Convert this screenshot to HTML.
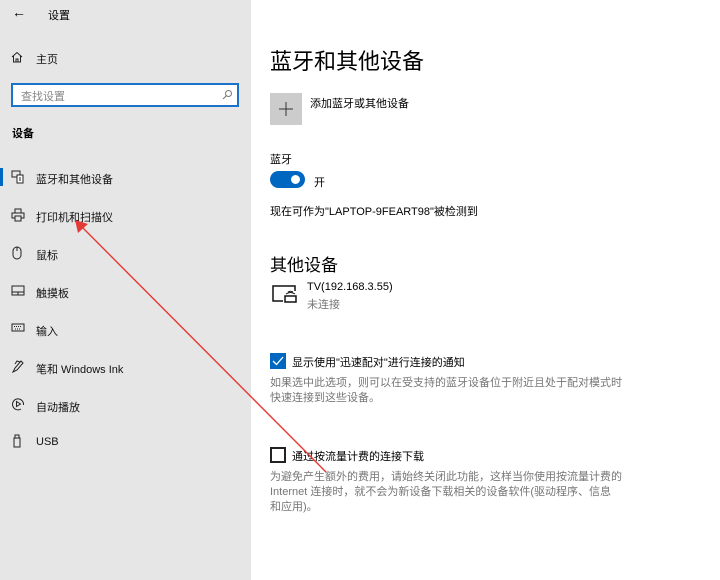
<!DOCTYPE html>
<html><head><meta charset="utf-8"><style>
*{margin:0;padding:0;box-sizing:border-box}
body{width:720px;height:580px;overflow:hidden;background:#fff;font-family:"Liberation Sans","Noto Sans CJK SC",sans-serif;color:#000;position:relative}
.side{position:absolute;left:0;top:0;width:251px;height:580px;background:#e6e6e6}
.t{position:absolute;white-space:nowrap}
.nav{font-size:11px;color:#111}
.ic{position:absolute;left:11px}
.g{color:#767676}
</style></head><body>
<div class="side">
<div class="t" style="left:12px;top:4px;font-size:14px">←</div>
<div class="t" style="left:48px;top:7px;font-size:11px">设置</div>
<svg class="ic" style="top:51px" width="12" height="12" viewBox="0 0 12 12"><path d="M1 6L6 1.5 11 6M2.5 5V11H9.5V5M5 11V8H7V11" fill="none" stroke="#222" stroke-width="1"/></svg>
<div class="t nav" style="left:36px;top:51px">主页</div>
<div style="position:absolute;left:11px;top:83px;width:228px;height:24px;border:2px solid #1a73c8;background:#fff"></div>
<div class="t" style="left:21px;top:88px;font-size:11px;color:#888">查找设置</div>
<svg style="position:absolute;left:222px;top:89px" width="11" height="11" viewBox="0 0 11 11"><circle cx="6.5" cy="4.5" r="3" fill="none" stroke="#777"/><path d="M4.5 6.5L1 10" stroke="#777"/></svg>
<div class="t" style="left:12px;top:125px;font-size:11px;font-weight:bold">设备</div>
<div style="position:absolute;left:0;top:168px;width:3px;height:18px;background:#0067c0"></div>
<svg class="ic" style="top:170px" width="14" height="14" viewBox="0 0 14 14"><rect x="1" y="1" width="8" height="6" fill="none" stroke="#222"/><rect x="6" y="5" width="6" height="8" fill="#fff" stroke="#222"/><path d="M8 8h2M8 10h2" stroke="#222"/></svg>
<div class="t nav" style="left:36px;top:171px">蓝牙和其他设备</div>
<svg class="ic" style="top:208px" width="14" height="14" viewBox="0 0 14 14"><rect x="4" y="1" width="6" height="4" fill="none" stroke="#222"/><rect x="1" y="5" width="12" height="5" fill="none" stroke="#222"/><rect x="4" y="8" width="6" height="5" fill="#e6e6e6" stroke="#222"/></svg>
<div class="t nav" style="left:36px;top:209px">打印机和扫描仪</div>
<svg class="ic" style="top:246px" width="12" height="14" viewBox="0 0 12 14"><rect x="2" y="1" width="8" height="12" rx="4" fill="none" stroke="#222"/><path d="M6 1v4" stroke="#222"/></svg>
<div class="t nav" style="left:36px;top:247px">鼠标</div>
<svg class="ic" style="top:285px" width="14" height="12" viewBox="0 0 14 12"><rect x="1" y="1" width="12" height="9" fill="none" stroke="#222"/><path d="M1 7h12M7 7v3" stroke="#222"/></svg>
<div class="t nav" style="left:36px;top:285px">触摸板</div>
<svg class="ic" style="top:323px" width="14" height="10" viewBox="0 0 14 10"><rect x="1" y="1" width="12" height="7" fill="none" stroke="#222"/><path d="M3 3.5h8M4 6h6" stroke="#222" stroke-dasharray="1 1"/></svg>
<div class="t nav" style="left:36px;top:323px">输入</div>
<svg class="ic" style="top:359px" width="14" height="14" viewBox="0 0 14 14"><path d="M2 13L4 9 10 2 12 4 6 11Z M9 3l-3-1-2 3" fill="none" stroke="#222"/></svg>
<div class="t nav" style="left:36px;top:361px">笔和 Windows Ink</div>
<svg class="ic" style="top:397px" width="14" height="14" viewBox="0 0 14 14"><path d="M10 12A5.5 5.5 0 1 1 12.5 8" fill="none" stroke="#222"/><path d="M5.5 4.5v5l4-2.5z" fill="none" stroke="#222"/></svg>
<div class="t nav" style="left:36px;top:399px">自动播放</div>
<svg class="ic" style="top:434px" width="12" height="14" viewBox="0 0 12 14"><rect x="3" y="4" width="6" height="9" fill="none" stroke="#222"/><rect x="4" y="1" width="4" height="3" fill="none" stroke="#222"/></svg>
<div class="t nav" style="left:36px;top:436px">USB</div>
</div>

<div class="t" style="left:270px;top:44px;font-size:22px">蓝牙和其他设备</div>
<div style="position:absolute;left:270px;top:93px;width:32px;height:32px;background:#ccc"></div>
<svg style="position:absolute;left:270px;top:93px" width="32" height="32"><path d="M16 9v14M9 16h14" stroke="#333" stroke-width="1"/></svg>
<div class="t" style="left:310px;top:95px;font-size:11px">添加蓝牙或其他设备</div>
<div class="t" style="left:270px;top:151px;font-size:11px">蓝牙</div>
<div style="position:absolute;left:270px;top:171px;width:35px;height:17px;border-radius:9px;background:#0067c0"></div>
<div style="position:absolute;left:291px;top:175px;width:9px;height:9px;border-radius:50%;background:#fff"></div>
<div class="t" style="left:314px;top:174px;font-size:11px">开</div>
<div class="t" style="left:270px;top:203px;font-size:11px">现在可作为"LAPTOP-9FEART98"被检测到</div>
<div class="t" style="left:270px;top:251px;font-size:17px">其他设备</div>
<svg style="position:absolute;left:272px;top:284px" width="26" height="20" viewBox="0 0 26 20"><path d="M11 17H1V2H23V7" fill="none" stroke="#111" stroke-width="1.5"/><rect x="13" y="12" width="11" height="6" fill="none" stroke="#111" stroke-width="1.5"/><path d="M14 10q4.5-3 9 0M16 8q2.5-1.5 5 0" fill="none" stroke="#111"/></svg>
<div class="t" style="left:307px;top:281px;font-size:11px">TV(192.168.3.55)</div>
<div class="t g" style="left:307px;top:296px;font-size:11px">未连接</div>
<div style="position:absolute;left:270px;top:353px;width:16px;height:16px;background:#0067c0"></div>
<svg style="position:absolute;left:270px;top:353px" width="16" height="16" viewBox="0 0 16 16"><path d="M3 8l3.5 3.5L13 4" fill="none" stroke="#fff" stroke-width="1.3"/></svg>
<div class="t" style="left:292px;top:354px;font-size:11px">显示使用"迅速配对"进行连接的通知</div>
<div class="t g" style="left:270px;top:376px;font-size:11px;line-height:15px">如果选中此选项，则可以在受支持的蓝牙设备位于附近且处于配对模式时<br>快速连接到这些设备。</div>
<div style="position:absolute;left:270px;top:447px;width:16px;height:16px;border:2px solid #222"></div>
<div class="t" style="left:292px;top:448px;font-size:11px">通过按流量计费的连接下载</div>
<div class="t g" style="left:270px;top:470px;font-size:11px;line-height:15px">为避免产生额外的费用，请始终关闭此功能，这样当你使用按流量计费的<br>Internet 连接时，就不会为新设备下载相关的设备软件(驱动程序、信息<br>和应用)。</div>

<svg style="position:absolute;left:0;top:0" width="720" height="580"><path d="M76 221L326 472" stroke="#e53935" stroke-width="1.4"/><path d="M75 220L78 233 88 224Z" fill="#e53935"/></svg>
</body></html>
